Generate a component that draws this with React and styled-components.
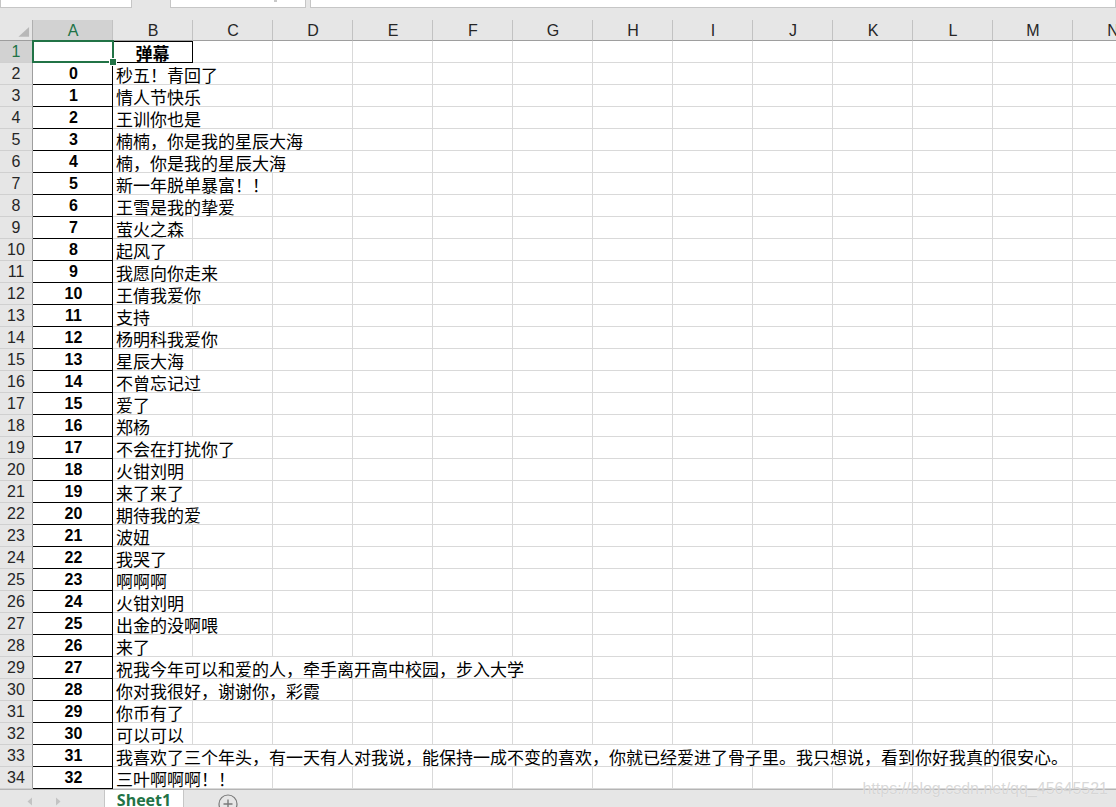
import React from "react";
import styled, { createGlobalStyle } from "styled-components";

const rows = [
  "秒五！青回了",
  "情人节快乐",
  "王训你也是",
  "楠楠，你是我的星辰大海",
  "楠，你是我的星辰大海",
  "新一年脱单暴富！！",
  "王雪是我的挚爱",
  "萤火之森",
  "起风了",
  "我愿向你走来",
  "王倩我爱你",
  "支持",
  "杨明科我爱你",
  "星辰大海",
  "不曾忘记过",
  "爱了",
  "郑杨",
  "不会在打扰你了",
  "火钳刘明",
  "来了来了",
  "期待我的爱",
  "波妞",
  "我哭了",
  "啊啊啊",
  "火钳刘明",
  "出金的没啊喂",
  "来了",
  "祝我今年可以和爱的人，牵手离开高中校园，步入大学",
  "你对我很好，谢谢你，彩霞",
  "你币有了",
  "可以可以",
  "我喜欢了三个年头，有一天有人对我说，能保持一成不变的喜欢，你就已经爱进了骨子里。我只想说，看到你好我真的很安心。",
  "三叶啊啊啊！！",
];

const COLS = ["A", "B", "C", "D", "E", "F", "G", "H", "I", "J", "K", "L", "M", "N"];
const GREEN = "#217346";

// how many columns the text in B spills over (full-width glyphs ~17px)
const spanFor = (text) => Math.max(1, Math.ceil((text.length * 17 + 6) / 80));

function App() {
  return (
    <Frame>
      <GlobalStyle />
      <TopStrip>
        <InputBox $width="132px" />
        <InputBox $width="136px" $gap="38px">
          <Dot />
        </InputBox>
        <InputBox $grow $gap="4px" />
      </TopStrip>

      <Sheet>
        <Corner>
          <svg width="33" height="21" viewBox="0 0 33 21">
            <polygon points="30,7 30,17 19,17" fill="#b8b8b8" />
          </svg>
        </Corner>
        {COLS.map((c) => (
          <ColHead key={c} $active={c === "A"}>
            {c}
          </ColHead>
        ))}

        <RowHead $active>1</RowHead>
        <IndexCell $selected />
        <TextCell $span={1} $boxed $bold>
          弹幕
        </TextCell>
        {Array.from({ length: 12 }).map((_, i) => (
          <EmptyCell key={i} />
        ))}

        {rows.map((text, i) => {
          const span = spanFor(text);
          return (
            <React.Fragment key={i}>
              <RowHead>{i + 2}</RowHead>
              <IndexCell>{i}</IndexCell>
              <TextCell $span={span}>{text}</TextCell>
              {Array.from({ length: 13 - span }).map((_, j) => (
                <EmptyCell key={j} />
              ))}
            </React.Fragment>
          );
        })}
      </Sheet>

      <TabBar>
        <NavArrows>
          <svg width="6" height="9" viewBox="0 0 6 9">
            <polygon points="5,0.5 5,8.5 0.5,4.5" fill="#c3c3c3" />
          </svg>
          <svg width="6" height="9" viewBox="0 0 6 9">
            <polygon points="1,0.5 1,8.5 5.5,4.5" fill="#c3c3c3" />
          </svg>
        </NavArrows>
        <SheetTab>Sheet1</SheetTab>
        <AddSheet>
          <svg width="22" height="22" viewBox="0 0 22 22">
            <circle cx="11" cy="11" r="9" fill="none" stroke="#7a7a7a" strokeWidth="1.2" />
            <path d="M11 6.5v9M6.5 11h9" stroke="#7a7a7a" strokeWidth="1.4" />
          </svg>
        </AddSheet>
      </TabBar>

      <Watermark>https://blog.csdn.net/qq_45645521</Watermark>
    </Frame>
  );
}
export default App;

///////// STYLES ///////

const GlobalStyle = createGlobalStyle`
  html, body {
    margin: 0;
    padding: 0;
    background: #fff;
    overflow: hidden;
  }
  * { box-sizing: border-box; }
`;

const Frame = styled.div`
  position: relative;
  width: 1116px;
  height: 807px;
  overflow: hidden;
  display: flex;
  flex-direction: column;
  background: #e6e6e6;
  font-family: "Liberation Sans", Arial, sans-serif;
`;

const TopStrip = styled.div`
  height: 20px;
  flex: none;
  display: flex;
  align-items: flex-start;
  background: #e6e6e6;
`;

const InputBox = styled.div`
  position: relative;
  height: 8px;
  width: ${(p) => p.$width || "auto"};
  flex: ${(p) => (p.$grow ? 1 : "none")};
  margin-left: ${(p) => p.$gap || 0};
  background: #fff;
  border: 1px solid #c6c6c6;
  border-top: none;
`;

const Dot = styled.span`
  position: absolute;
  right: 28px;
  top: 0;
  width: 3px;
  height: 2px;
  background: #c8c8c8;
`;

const Sheet = styled.div`
  flex: none;
  display: grid;
  grid-template-columns: 33px repeat(14, 80px);
  grid-template-rows: 21px;
  grid-auto-rows: 22px;
  width: 1153px;
  background: #fff;
`;

const Corner = styled.div`
  background: #e6e6e6;
  border-right: 1px solid #b0b0b0;
  border-bottom: 1px solid #9e9e9e;
  display: flex;

  svg {
    display: block;
  }
`;

const ColHead = styled.div`
  display: flex;
  align-items: center;
  justify-content: center;
  padding: 1px 0 0 1px;
  font-size: 16px;
  color: ${(p) => (p.$active ? GREEN : "#262626")};
  background: ${(p) => (p.$active ? "#d2d2d2" : "#e6e6e6")};
  border-right: 1px solid #c2c2c2;
  border-bottom: 1px solid #9e9e9e;
`;

const RowHead = styled.div`
  display: flex;
  align-items: center;
  justify-content: center;
  font-size: 16px;
  color: ${(p) => (p.$active ? GREEN : "#262626")};
  background: ${(p) => (p.$active ? "#d2d2d2" : "#e6e6e6")};
  border-right: 1px solid #9e9e9e;
  border-bottom: 1px solid #d0d0d0;
`;

const IndexCell = styled.div`
  position: relative;
  z-index: ${(p) => (p.$selected ? 2 : "auto")};
  display: flex;
  align-items: center;
  justify-content: center;
  padding-left: 2px;
  font-size: 16px;
  font-weight: bold;
  color: #000;
  border-right: 1px solid #000;
  border-bottom: 1px solid #000;

  ${(p) =>
    p.$selected &&
    `
    &::before {
      content: "";
      position: absolute;
      top: -1px;
      left: -1px;
      right: -2px;
      bottom: -1px;
      border: 2px solid ${GREEN};
    }
    &::after {
      content: "";
      position: absolute;
      right: -5px;
      bottom: -4px;
      width: 6px;
      height: 6px;
      background: ${GREEN};
      border: 1px solid #fff;
    }
  `}
`;

const TextCell = styled.div`
  grid-column: span ${(p) => p.$span};
  display: flex;
  align-items: center;
  justify-content: ${(p) => (p.$bold ? "center" : "flex-start")};
  padding-left: ${(p) => (p.$bold ? 0 : "3px")};
  padding-top: 1px;
  white-space: nowrap;
  overflow: hidden;
  font-family: "Liberation Sans", "Noto Sans CJK SC", sans-serif;
  font-size: 17px;
  font-weight: ${(p) => (p.$bold ? "bold" : "normal")};
  color: #000;
  border-right: 1px solid ${(p) => (p.$boxed ? "#000" : "#d9d9d9")};
  border-bottom: 1px solid ${(p) => (p.$boxed ? "#000" : "#d9d9d9")};
  box-shadow: ${(p) => (p.$boxed ? "inset 0 1px 0 #000" : "none")};
`;

const EmptyCell = styled.div`
  border-right: 1px solid #d9d9d9;
  border-bottom: 1px solid #d9d9d9;
`;

const TabBar = styled.div`
  flex: 1;
  display: flex;
  align-items: flex-start;
  background: #e6e6e6;
  border-top: 1px solid #b4b4b4;
  overflow: hidden;
`;

const NavArrows = styled.div`
  width: 104px;
  flex: none;
  display: flex;
  gap: 22px;
  padding: 7px 0 0 27px;

  svg {
    display: block;
  }
`;

const SheetTab = styled.div`
  width: 80px;
  height: 19px;
  flex: none;
  margin-top: -1px;
  background: #fff;
  border-left: 1px solid #c6c6c6;
  border-right: 1px solid #c6c6c6;
  text-align: center;
  font-family: "Open Sans", "Noto Sans", sans-serif;
  font-size: 16px;
  font-weight: bold;
  line-height: 23px;
  color: ${GREEN};
`;

const AddSheet = styled.div`
  margin-left: 33px;
  padding-top: 3px;

  svg {
    display: block;
  }
`;

const Watermark = styled.div`
  position: absolute;
  right: 8px;
  bottom: 9px;
  font-family: "Liberation Sans", Arial, sans-serif;
  font-size: 16px;
  color: rgba(190, 190, 190, 0.6);
  text-shadow: 0 0 1px rgba(255, 255, 255, 0.9);
  pointer-events: none;
`;
